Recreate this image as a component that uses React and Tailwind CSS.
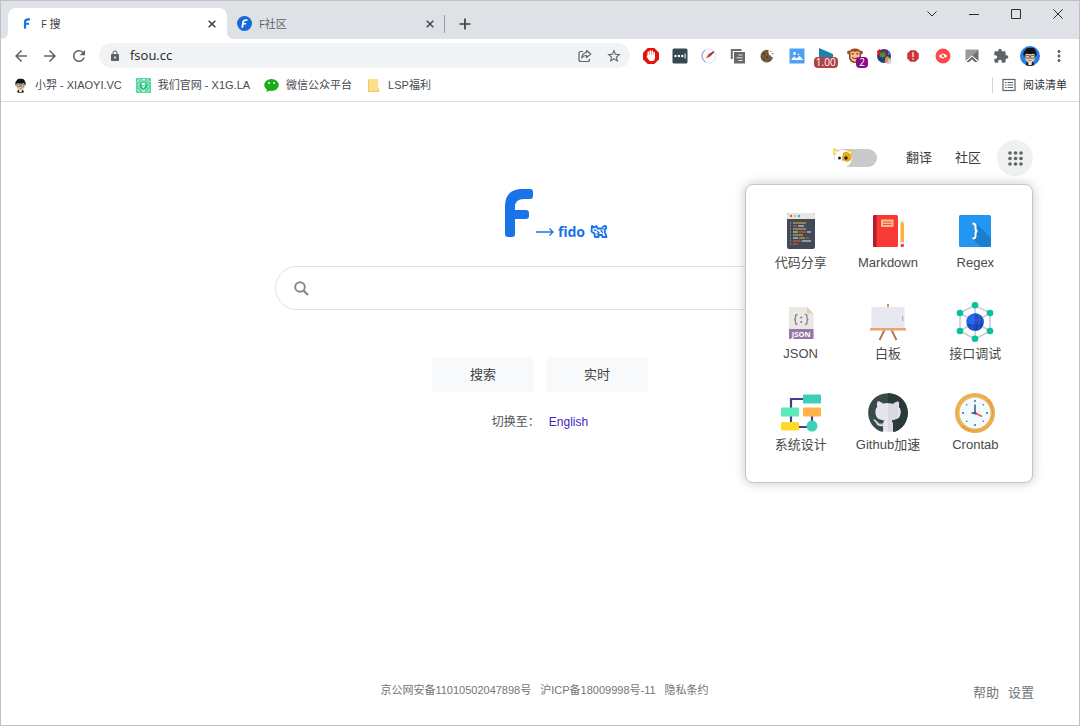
import React from "react";
import { MdArrowBack, MdArrowForward, MdRefresh, MdLock, MdExtension, MdMoreVert, MdStarOutline } from "react-icons/md";
import { FaGithub } from "react-icons/fa";

const chromeFont = "font-['Open_Sans','Noto_Sans_CJK_SC',sans-serif]";
const pageFont = "font-['Liberation_Sans','Noto_Sans_CJK_SC',sans-serif]";

function FMark({ className }) {
  return (
    <svg viewBox="0 0 30 50" className={className} aria-hidden="true">
      <path
        d="M1 18C1 6 8 1 19 1H26Q29 1 29 4V8Q29 11 26 11H20Q11 11 11 19V22H22Q25 22 25 25V28Q25 31 22 31H11V46Q11 49 8 49H4Q1 49 1 46Z"
        fill="currentColor"
      />
    </svg>
  );
}

function CloseIcon({ className }) {
  return (
    <svg viewBox="0 0 8 8" className={className} aria-hidden="true">
      <path d="M.7.7 7.3 7.3M7.3.7.7 7.3" stroke="currentColor" strokeWidth="1.5" />
    </svg>
  );
}

function TabStrip() {
  return (
    <div className="flex h-[38px] items-end bg-[#dee1e6] pl-[7px]">
      <div className="relative flex h-[31px] w-[219px] items-center rounded-t-lg bg-white pl-[13px] pr-[11px]">
        <svg viewBox="0 0 8 8" className="absolute bottom-0 -left-[7px] size-[7px]" aria-hidden="true">
          <path d="M8 0V8H0Q8 8 8 0" fill="#fff" />
        </svg>
        <svg viewBox="0 0 8 8" className="absolute -right-[7px] bottom-0 size-[7px]" aria-hidden="true">
          <path d="M0 0V8H8Q0 8 0 0" fill="#fff" />
        </svg>
        <FMark className="h-[11px] w-[12px] text-[#1a73e8]" />
        <span className="ml-2 flex-1 pt-px text-[11px] text-[#3c4043]">F 搜</span>
        <button type="button" aria-label="关闭 F 搜" className="text-[#3c4043]">
          <CloseIcon className="size-2" />
        </button>
      </div>
      <div className="flex h-[31px] w-[217px] items-center pl-[10px] pr-[10px]">
        <span className="flex size-[15px] items-center justify-center rounded-full bg-[#1668dc] text-white">
          <FMark className="h-[9px] w-[7px] skew-x-[-8deg]" />
        </span>
        <span className="ml-[7px] flex-1 pt-px text-[11px] text-[#5f6368]">F社区</span>
        <button type="button" aria-label="关闭 F社区" className="text-[#45484c]">
          <CloseIcon className="size-2" />
        </button>
      </div>
      <span className="mb-[6px] h-[18px] w-px bg-[#9a9da1]" />
      <button type="button" aria-label="新标签页" className="mb-[9px] ml-[14px] text-[#3c4043]">
        <svg viewBox="0 0 12 12" className="size-3" aria-hidden="true">
          <path d="M6 .5V11.5M.5 6H11.5" stroke="currentColor" strokeWidth="1.7" />
        </svg>
      </button>
      <div className="ml-auto flex self-start text-[#2c2e31]">
        <button type="button" aria-label="搜索标签页" className="flex h-[26px] w-[42px] items-center justify-center">
          <svg viewBox="0 0 10 10" className="size-[10px]" aria-hidden="true">
            <path d="M.5 2.5 5 7 9.5 2.5" fill="none" stroke="currentColor" strokeWidth="1" />
          </svg>
        </button>
        <button type="button" aria-label="最小化" className="flex h-[26px] w-[42px] items-center justify-center">
          <svg viewBox="0 0 10 10" className="size-[10px]" aria-hidden="true">
            <path d="M0 5.5H10" stroke="currentColor" />
          </svg>
        </button>
        <button type="button" aria-label="最大化" className="flex h-[26px] w-[42px] items-center justify-center">
          <svg viewBox="0 0 10 10" className="size-[10px]" aria-hidden="true">
            <path d="M.5.5H9.5V9.5H.5Z" fill="none" stroke="currentColor" />
          </svg>
        </button>
        <button type="button" aria-label="关闭" className="flex h-[26px] w-[42px] items-center justify-center">
          <svg viewBox="0 0 10 10" className="size-[10px]" aria-hidden="true">
            <path d="M.3.3 9.7 9.7M9.7.3.3 9.7" stroke="currentColor" />
          </svg>
        </button>
      </div>
    </div>
  );
}

const extensions = [
  {
    label: "广告拦截",
    icon: (
      <svg viewBox="0 0 16 16" className="size-4">
        <path d="M4.7 0H11.3L16 4.7V11.3L11.3 16H4.7L0 11.3V4.7Z" fill="#e3120b" />
        <path d="M5.3 8V4.3M7.3 7.5V3M9.3 7.5V3.3M11.2 8.5V4.8" stroke="#fff" strokeWidth="1.6" strokeLinecap="round" />
        <path d="M4.6 7H12V9.5Q12 13.3 8.5 13.3 6.2 13.3 5 11L3.6 8.5Z" fill="#fff" />
      </svg>
    ),
  },
  {
    label: "密码管理",
    icon: (
      <svg viewBox="0 0 16 16" className="size-4">
        <rect x=".5" y=".5" width="15" height="15" rx="1.5" fill="#37474f" />
        <g fill="#fff">
          <circle cx="3.500" cy="8" r="1.2" />
          <circle cx="6.9" cy="8" r="1.2" />
          <circle cx="10.3" cy="8" r="1.2" />
          <rect x="12.6" y="5.500" width="1" height="5" />
        </g>
      </svg>
    ),
  },
  {
    label: "网页助手",
    icon: (
      <svg viewBox="0 0 16 16" className="size-4">
        <circle cx="8" cy="8" r="7" fill="#fbfbfd" stroke="#e0e2e8" />
        <path d="M4 2.3A7 7 0 0 0 4.500 14" fill="none" stroke="#9fb1e2" strokeWidth="1.2" />
        <path d="M5 10.500 7.500 6 12 4 10 8Z" fill="#d8343e" />
        <path d="M10 6.300 12.800 3.600" stroke="#7b2737" strokeWidth="1.500" />
      </svg>
    ),
  },
  {
    label: "复制",
    icon: (
      <svg viewBox="0 0 16 16" className="size-4">
        <path d="M1.800 11V2H11.500" fill="none" stroke="#6d6d6d" strokeWidth="2" />
        <rect x="4" y="4" width="11" height="11.500" fill="#686868" />
        <path d="M8.500 7H12.500M6.500 9.700H12.500M8.500 12.500H12.500" stroke="#e6e6e6" strokeWidth="1.100" />
      </svg>
    ),
  },
  {
    label: "Cookie",
    icon: (
      <svg viewBox="0 0 16 16" className="size-4">
        <path d="M10 2.200A6.300 6.300 0 1 0 14 9.500Q12 9.300 11.600 7.600 9.500 7.500 9.800 5.300 8.800 3.700 10 2.200" fill="#76583f" />
        <circle cx="12" cy="3.500" r=".8" fill="#b39b86" />
        <circle cx="13.800" cy="5.700" r=".7" fill="#76583f" />
        <g fill="#4d3726">
          <circle cx="5" cy="6" r=".9" />
          <circle cx="8" cy="9" r=".9" />
          <circle cx="5" cy="11" r=".8" />
          <circle cx="10" cy="12" r=".7" />
        </g>
      </svg>
    ),
  },
  {
    label: "图片",
    icon: (
      <svg viewBox="0 0 16 16" className="size-4">
        <rect x=".5" y=".5" width="15" height="15" fill="#4f9ff4" />
        <circle cx="5.500" cy="5.500" r="1.400" fill="#fff" />
        <circle cx="9.500" cy="6.500" r=".8" fill="#fff" />
        <path d="M2.500 12V11L5 8.500 7.500 10.500 10.500 8 13.500 11V12Z" fill="#fff" />
      </svg>
    ),
  },
  {
    label: "视频速度",
    icon: (
      <span className="flex flex-col items-center pt-[5px]">
        <svg viewBox="0 0 14 9" className="h-[9px] w-[14px]">
          <path d="M0 0 14 6V9H0Z" fill="#1685b2" />
        </svg>
        <span className="rounded-sm bg-[#ad4343] px-[2px] text-[10px] leading-[11px] text-white">1.00</span>
      </span>
    ),
  },
  {
    label: "脚本管理",
    icon: (
      <span className="relative flex">
        <svg viewBox="0 0 16 16" className="size-4">
          <circle cx="2" cy="4.500" r="2" fill="#a45629" />
          <circle cx="14" cy="4.500" r="2" fill="#a45629" />
          <path d="M2 6Q2 .5 8 .5T14 6V10Q13 15 8 15T2 10Z" fill="#a1481f" />
          <path d="M3.500 4Q5.500 2.300 8 4 10.500 2.300 12.500 4V10Q11 13.500 8 13.500T3.500 10Z" fill="#ecc39a" />
          <circle cx="5.700" cy="5.800" r="1" fill="#c5271c" />
          <circle cx="10.300" cy="5.800" r="1" fill="#c5271c" />
          <path d="M5 9.500Q8 12 11 9.500" fill="none" stroke="#7c3518" />
        </svg>
        <span className="absolute -right-[5px] -bottom-[4px] rounded-sm bg-[#860b8d] px-[3px] text-[10px] leading-[11px] text-white">2</span>
      </span>
    ),
  },
  {
    label: "翻译插件",
    icon: (
      <svg viewBox="0 0 16 16" className="size-4">
        <circle cx="8" cy="8" r="7" fill="#203f7c" />
        <path d="M1 3 4 1 6 5 9 2 11 7 7 10 2 7Z" fill="#d4191c" />
        <circle cx="6.500" cy="7" r="2.500" fill="#28a245" />
        <path d="M12 3 14.500 6 12 7Z" fill="#308bc9" />
        <path d="M9 15Q8 10 11 8L14 10 15 14Z" fill="#dc8d43" />
        <path d="M12 11 16 13 14 16H11Z" fill="#d9d2ca" />
      </svg>
    ),
  },
  {
    label: "提醒",
    icon: (
      <svg viewBox="0 0 16 16" className="size-4">
        <path d="M5.500 2.200H10.500L13.800 5.500V10.500L10.500 13.800H5.500L2.200 10.500V5.500Z" fill="#c93538" />
        <path d="M8 4.300V9M8 10.300V11.800" stroke="#f6dcdc" strokeWidth="1.500" />
      </svg>
    ),
  },
  {
    label: "隐藏内容",
    icon: (
      <svg viewBox="0 0 16 16" className="size-4">
        <circle cx="8" cy="8" r="7.500" fill="#fb4a4d" />
        <path d="M3.700 8Q8 3 12.300 8 8 13 3.700 8Z" fill="#fff" />
        <circle cx="8" cy="8" r="1.200" fill="#fb4a4d" />
        <path d="M4.500 5 12 11.500" stroke="#fb4a4d" strokeWidth=".9" />
      </svg>
    ),
  },
  {
    label: "截图",
    icon: (
      <svg viewBox="0 0 16 16" className="size-4">
        <path d="M1.500 1.500H14.500L8 7.500 1.500 13Z" fill="#9a9a9a" />
        <path d="M14.500 1.500V13L8 7.500Z" fill="#707070" />
        <path d="M1.500 14.500 8 8 14.500 14.500H11L8 11.800 5 14.500Z" fill="#686868" stroke="#fff" strokeWidth=".9" />
      </svg>
    ),
  },
  { label: "扩展程序", icon: <MdExtension className="size-4 text-[#5f6368]" /> },
  {
    label: "个人资料",
    icon: (
      <svg viewBox="0 0 20 20" className="size-5">
        <circle cx="10" cy="10" r="10" fill="#2b7de0" />
        <Face />
      </svg>
    ),
  },
  { label: "菜单", icon: <MdMoreVert className="size-[18px] text-[#5f6368]" /> },
];

function Face() {
  return (
    <g>
      <path d="M5.500 19 7 15.500H13L14.500 19Q10 21 5.500 19" fill="#222" />
      <path d="M8 15H12L11.500 19H8.500Z" fill="#eee" />
      <ellipse cx="10" cy="11.500" rx="5" ry="5" fill="#f0cda9" />
      <path d="M4 11Q2.500 6 5 4.500 6 1.300 10 2 15 1 15.600 5 17.500 7 16 11L14.500 7.500 10 8.300 5.500 7.500Z" fill="#111" />
      <path d="M5.500 9.500H9.300V12.300H5.800ZM10.700 9.500H14.500L14.200 12.300H10.700ZM9.300 10.500H10.700" fill="none" stroke="#555" strokeWidth=".8" />
      <path d="M8.500 14.500H11.500" stroke="#94624a" strokeWidth=".8" />
    </g>
  );
}

function Toolbar() {
  const nav = "flex h-[25px] w-[29px] items-center justify-center text-[#5f6368]";
  return (
    <div className="flex items-center bg-white pt-1 pr-[5px] pb-[5px] pl-[5px]">
      <button type="button" aria-label="后退" className={nav}><MdArrowBack className="size-[18px]" /></button>
      <button type="button" aria-label="前进" className={nav}><MdArrowForward className="size-[18px]" /></button>
      <button type="button" aria-label="刷新" className={nav}><MdRefresh className="size-[18px]" /></button>
      <div className="mx-[6px] flex h-[25px] min-w-0 flex-1 items-center rounded-full bg-[#f1f3f4] pr-[8px] pl-[10px] text-[#5f6368]">
        <MdLock className="size-3 shrink-0" />
        <input
          type="text"
          aria-label="地址栏"
          defaultValue="fsou.cc"
          className="ml-[9px] min-w-0 flex-1 bg-transparent text-[13px] text-[#202124] outline-none"
        />
        <button type="button" aria-label="分享此页" className="mr-[14px]">
          <svg viewBox="0 0 14 14" className="size-[14px]" aria-hidden="true">
            <g fill="none" stroke="currentColor" strokeWidth="1.200" strokeLinejoin="round">
              <path d="M5 2.500H3Q1 2.500 1 4.500V10.500Q1 12.500 3 12.500H9.500Q11.500 12.500 11.500 10.500V10" />
              <path d="M8.500 1.500 12.800 5 8.500 8.500V6.500Q5.300 6.300 3.800 9 4.200 4 8.500 3.500Z" />
            </g>
          </svg>
        </button>
        <button type="button" aria-label="为此页添加书签">
          <MdStarOutline className="size-4" />
        </button>
      </div>
      <div className="flex w-[438px] shrink-0 justify-between">
        {extensions.map((e) => (
          <button key={e.label} type="button" aria-label={e.label} className="flex h-[25px] w-[29px] shrink-0 items-center justify-center">
            {e.icon}
          </button>
        ))}
      </div>
    </div>
  );
}

function Bookmark({ icon, children }) {
  return (
    <a href="#" className="flex items-center gap-[7px] whitespace-nowrap">
      {icon}
      {children}
    </a>
  );
}

function BookmarksBar() {
  return (
    <div className={`flex h-[29px] items-center gap-[14px] border-b border-[#dcdee1] bg-white pr-3 pb-[4px] pl-[12px] text-[11px] text-[#46494d] ${pageFont}`}>
      <Bookmark icon={<svg viewBox="2 1 16 19" className="size-[15px]"><Face /></svg>}>小羿 - XIAOYI.VC</Bookmark>
      <Bookmark
        icon={
          <svg viewBox="0 0 15 15" className="size-[15px]">
            <rect width="15" height="15" rx="1" fill="#5bd6a0" />
            <path d="M1 4 4 1M11 1 14 4M1 11 4 14M11 14 14 11M6 1.500H9M6 13.500H9" stroke="#c9f5e2" />
            <circle cx="7.500" cy="7.500" r="4.700" fill="#26bf7c" stroke="#e3fbf0" strokeWidth=".8" />
            <path d="M5.500 5.300 7.500 4.500 9.500 5.300Q9.700 9 7.500 10.500 5.300 9 5.500 5.300" fill="#effff8" />
            <path d="M6.500 7.200 7.300 8.200 8.600 6.500" fill="none" stroke="#1ba268" strokeWidth=".8" />
          </svg>
        }
      >
        我们官网 - X1G.LA
      </Bookmark>
      <Bookmark
        icon={
          <svg viewBox="0 0 15 15" className="size-[15px]">
            <ellipse cx="7.500" cy="7" rx="7.300" ry="6" fill="#1aad19" />
            <path d="M3 11 2.500 14 6 12.500Z" fill="#1aad19" />
            <circle cx="5" cy="5" r="1" fill="#eaffea" />
            <circle cx="10" cy="5" r="1" fill="#eaffea" />
          </svg>
        }
      >
        微信公众平台
      </Bookmark>
      <Bookmark
        icon={
          <svg viewBox="0 0 15 15" className="size-[15px]">
            <path d="M2 1H12V9.500L13 10V14H2Z" fill="#ffe08a" />
            <path d="M2 1V14H13V13H3V1Z" fill="#f3ca56" />
            <path d="M10.500 14 13 10.500V14Z" fill="#f0c24b" />
          </svg>
        }
      >
        LSP福利
      </Bookmark>
      <button type="button" className="ml-auto flex items-center gap-[7px] border-l border-[#d0d3d7] pl-[9px] text-[#2f3236]">
        <svg viewBox="0 0 14 14" className="size-[14px]" aria-hidden="true">
          <rect x="1" y="1.500" width="12" height="11" fill="none" stroke="#5f6368" strokeWidth="1.200" />
          <path d="M3 4.500H4.500M3 7H4.500M3 9.500H4.500M5.500 4.500H11M5.500 7H11M5.500 9.500H11" stroke="#5f6368" />
        </svg>
        阅读清单
      </button>
    </div>
  );
}

const apps = [
  {
    name: "代码分享",
    icon: (
      <svg viewBox="0 0 40 40" className="size-10" aria-hidden="true">
        <rect x="6" y="2" width="28" height="36" rx="2" fill="#414b58" />
        <path d="M6 8V4Q6 2 8 2H32Q34 2 34 4V8Z" fill="#e6e6e8" />
        <circle cx="10" cy="5" r="1.200" fill="#f0573a" />
        <circle cx="14" cy="5" r="1.200" fill="#f4bd3f" />
        <circle cx="18" cy="5" r="1.200" fill="#35b7a8" />
        <g strokeWidth="1.200">
          <path d="M9 12H10M9 15H10M9 18H10M9 21H10M9 24H10M9 27H10M9 30H10M9 33H10" stroke="#aab2bb" />
          <path d="M12 12H25M12 18H25M12 24H22M18 27H24" stroke="#e8b83f" />
          <path d="M12 15H16M18 21H25M25 27H28M12 30H20M12 33H17" stroke="#ed5534" />
          <path d="M17 15H23M12 21H17M26 21H30M12 27H17M21 30H30" stroke="#e8ebee" />
        </g>
      </svg>
    ),
  },
  {
    name: "Markdown",
    icon: (
      <svg viewBox="0 0 40 40" className="size-10" aria-hidden="true">
        <rect x="5" y="4" width="25" height="32" rx="1.500" fill="#f93838" />
        <path d="M6.500 4H8.500V36H6.500Q5 36 5 34.500V5.500Q5 4 6.500 4" fill="#b71c24" />
        <rect x="13" y="8.500" width="12.500" height="7.500" fill="#ffb98a" />
        <path d="M15 11H23.500M15 13.500H23.500" stroke="#f1563c" strokeWidth="1.200" />
        <path d="M32.500 13 34.300 9.500 36 13V32H32.500Z" fill="#ffb03a" />
        <rect x="32.500" y="31" width="3.500" height="2" fill="#eceff1" />
        <rect x="32.500" y="33" width="3.500" height="3" rx="1" fill="#ef4040" />
      </svg>
    ),
  },
  {
    name: "Regex",
    icon: (
      <svg viewBox="0 0 40 40" className="size-10" aria-hidden="true">
        <rect x="4" y="4" width="32" height="32" rx="1.500" fill="#2196f3" />
        <path d="M22 13 36 27V34.500Q36 36 34.500 36H26L17.500 27.500Z" fill="#1b7fd0" />
        <path d="M17.500 12.500Q20.500 12.500 20.500 15V17.500Q20.500 20 22.500 20 20.500 20 20.500 22.500V25Q20.500 27.500 17.500 27.500" fill="none" stroke="#fff" strokeWidth="2" />
      </svg>
    ),
  },
  {
    name: "JSON",
    icon: (
      <svg viewBox="0 0 40 40" className="size-10" aria-hidden="true">
        <path d="M8 5H26L32.500 11.500V37H8Z" fill="#e9e9e0" />
        <path d="M26 5 32.500 11.500H26Z" fill="#d3d3c4" />
        <rect x="8" y="27" width="24.500" height="10" fill="#9777a8" />
        <path d="M16.500 12.500Q14.500 12.500 14.500 14.500V16Q14.500 17.500 13 17.500 14.500 17.500 14.500 19V20.500Q14.500 22.500 16.500 22.500M24 12.500Q26 12.500 26 14.500V16Q26 17.500 27.500 17.500 26 17.500 26 19V20.500Q26 22.500 24 22.500" fill="none" stroke="#9777a8" strokeWidth="1.300" />
        <circle cx="20.200" cy="15.500" r="1.100" fill="#9777a8" />
        <circle cx="20.200" cy="20" r="1.100" fill="#9777a8" />
        <text x="20.200" y="34.800" textAnchor="middle" fontSize="7.500" fontWeight="700" fill="#fff" fontFamily="Noto Sans, sans-serif">JSON</text>
      </svg>
    ),
  },
  {
    name: "白板",
    icon: (
      <svg viewBox="0 0 40 40" className="size-10" aria-hidden="true">
        <path d="M20 2V6" stroke="#d18a52" strokeWidth="1.800" />
        <path d="M16.500 28 11.500 38M23.500 28 28.500 38" stroke="#a9744c" strokeWidth="1.800" />
        <rect x="3.500" y="5" width="33" height="22" fill="#e9e8f0" />
        <rect x="34" y="14" width="1.300" height="5" fill="#b7b5c4" />
        <rect x="2" y="26" width="36" height="2.500" fill="#e8a56b" />
      </svg>
    ),
  },
  {
    name: "接口调试",
    icon: (
      <svg viewBox="0 0 40 40" className="size-10" aria-hidden="true">
        <path d="M20 3.500 35 11V29L20 37 5 29V11ZM20 3.500V37M5 11 35 29M35 11 5 29" fill="none" stroke="#cbccdc" strokeWidth="1.600" />
        <circle cx="20" cy="20" r="8.700" fill="#2563eb" />
        <path d="M20 11.300A8.700 8.700 0 0 1 20 28.700Z" fill="#1e4fc7" />
        <path d="M11.500 22H28.500A8.700 8.700 0 0 1 11.500 22" fill="#183b9b" opacity=".55" />
        <path d="M11.300 18H28.700M17 12V28M24 12.300V27.700" stroke="#4681f4" strokeWidth=".6" opacity=".7" />
        <g fill="#05c29c">
          <circle cx="20" cy="3.300" r="3.300" />
          <circle cx="35" cy="11" r="3.300" />
          <circle cx="35" cy="29" r="3.300" />
          <circle cx="20" cy="36.700" r="3.300" />
          <circle cx="5" cy="29" r="3.300" />
          <circle cx="5" cy="11" r="3.300" />
        </g>
      </svg>
    ),
  },
  {
    name: "系统设计",
    icon: (
      <svg viewBox="0 0 40 40" className="size-10" aria-hidden="true">
        <path d="M22 6H10V34M31 18V34H15" fill="none" stroke="#443d98" strokeWidth="2.200" />
        <rect x="22" y="1.500" width="18" height="9" rx="1" fill="#3ecfb7" />
        <rect x="0" y="14.500" width="18" height="9" rx="1" fill="#5eeabb" />
        <rect x="22" y="14.500" width="18" height="9" rx="1" fill="#ffb349" />
        <rect x="0" y="29" width="18" height="8.500" rx="1" fill="#ffda2d" />
        <circle cx="31" cy="33" r="5.500" fill="#3ecfb7" />
      </svg>
    ),
  },
  {
    name: "Github加速",
    icon: (
      <svg viewBox="0 0 40 40" className="size-10" aria-hidden="true">
        <clipPath id="gh-right"><rect x="20" y="0" width="20" height="40" /></clipPath>
        <circle cx="20" cy="20" r="19" fill="#e6e5ec" />
        <path d="M20 8V39A19 19 0 0 0 30 36V8Z" fill="#dad9e2" />
        <FaGithub size={41} x="-.5" y="-.5" color="#384a49" />
        <g clipPath="url(#gh-right)">
          <FaGithub size={41} x="-.5" y="-.5" color="#293a39" />
        </g>
      </svg>
    ),
  },
  {
    name: "Crontab",
    icon: (
      <svg viewBox="0 0 40 40" className="size-10" aria-hidden="true">
        <circle cx="20" cy="20" r="20" fill="#eab04f" />
        <path d="M34 6A20 20 0 0 1 6 34Z" fill="#e69c42" />
        <circle cx="20" cy="20" r="17" fill="#edb855" />
        <circle cx="20" cy="20" r="15.500" fill="#f1fafe" />
        <g fill="#4a6b85">
          <circle cx="20" cy="8" r="1" /><circle cx="28.300" cy="11.700" r=".8" />
          <circle cx="32" cy="20" r="1" /><circle cx="28.300" cy="28.300" r=".8" />
          <circle cx="20" cy="32" r="1" /><circle cx="11.700" cy="28.300" r=".8" />
          <circle cx="8" cy="20" r="1" /><circle cx="11.700" cy="11.700" r=".8" />
        </g>
        <path d="M20 11.500V21M16.500 20H20" stroke="#3d5b78" strokeWidth="1.500" />
        <path d="M20 20 27 23.500" stroke="#e5525b" strokeWidth="1.500" />
        <circle cx="20" cy="20" r="1.600" fill="#3d5b78" />
      </svg>
    ),
  },
];

function AppsPanel() {
  return (
    <nav
      aria-label="应用"
      className="absolute top-[calc(100%+8px)] right-0 z-10 grid w-72 grid-cols-3 gap-y-[29px] rounded-lg border border-[#c4c4c4] bg-white pt-[26px] pr-[13px] pb-[27px] pl-[11px] shadow-[0_0_12px_rgba(0,0,0,0.22)]"
    >
      {apps.map((a) => (
        <a key={a.name} href="#" className="flex flex-col items-center gap-[2px] text-[13px] leading-5 text-[#4a4a4a]">
          {a.icon}
          {a.name}
        </a>
      ))}
    </nav>
  );
}

function CatToggle() {
  return (
    <label className="relative flex">
      <input type="checkbox" role="switch" aria-label="深色模式" className="h-[18px] w-[43px] appearance-none rounded-full bg-[#cacaca]" />
      <svg viewBox="0 0 21 20" className="pointer-events-none absolute -top-px -left-px h-5 w-[21px]" aria-hidden="true">
        <path d="M1 7 .8.800 6 3Z" fill="#fff2b8" stroke="#f2bb20" />
        <path d="M14 3 20 3 17 8Z" fill="#fff2b8" stroke="#f2bb20" />
        <circle cx="10" cy="10.500" r="8.700" fill="#fff" />
        <path d="M10 5Q14 2 18 6.500 19.500 12 15.500 13.500 11 14.500 9 10Z" fill="#e5ad15" />
        <circle cx="6.500" cy="10" r="1.500" fill="#222" />
        <circle cx="13" cy="10" r="1.700" fill="#222" />
        <path d="M9 12H10.500" stroke="#666" />
      </svg>
    </label>
  );
}

export default function App() {
  return (
    <div className={`flex min-h-screen flex-col border border-[#bfc0c2] bg-white ${pageFont}`}>
      <header className={chromeFont}>
        <TabStrip />
        <Toolbar />
        <BookmarksBar />
      </header>
      <main className="flex flex-1 flex-col">
        <div className="relative z-10 flex items-center justify-end pt-[38px] pr-[46px] text-[13px] text-[#3c3c3c]">
          <CatToggle />
          <a href="#" className="ml-[29px]">翻译</a>
          <a href="#" className="ml-[23px]">社区</a>
          <div className="relative ml-4">
            <button type="button" aria-label="应用菜单" aria-expanded="true" className="flex size-9 items-center justify-center rounded-full bg-[#eff1f1]">
              <svg viewBox="0 0 15 15" className="size-[15px]" fill="#5f6368" aria-hidden="true">
                {[2, 7.5, 13].map((y) => [2, 7.5, 13].map((x) => <circle key={`${x}-${y}`} cx={x} cy={y} r="1.800" />))}
              </svg>
            </button>
            <AppsPanel />
          </div>
        </div>

        <div className="mx-auto mt-3 flex w-full max-w-[530px] flex-col items-center">
          <h1 className="flex items-end pl-8 text-[#1a73e8]">
            <FMark className="h-[50px] w-[30px]" />
            <span className="flex h-[13px] items-center">
              <svg viewBox="0 0 18 8" className="ml-[2px] h-2 w-[18px]" aria-hidden="true">
                <path d="M0 4H17M13.500.5 17 4 13.500 7.500" fill="none" stroke="currentColor" strokeWidth="1.300" />
              </svg>
              <span className="ml-1 font-['Noto_Sans',sans-serif] text-[14px] leading-5 font-bold">fido</span>
              <svg viewBox="0 0 18 15" className="ml-[5px] h-[15px] w-[18px]" aria-hidden="true">
                <g stroke="currentColor" strokeLinejoin="round" strokeLinecap="round">
                  <path
                    d="M2 2 4 3.500 6.500 2 7.500 4.500H12.500Q13 1.500 15.500 2 17.500 4 14.500 5.500L15 8.500 16.500 13H12.500L12 11H8.500L8.500 13H5L4.500 9.500 1.500 7.500Z"
                    fill="none"
                    strokeWidth="1.900"
                  />
                  <path d="M4.500 6.200H6M7.500 7.500 9 8.500M11 6.500 12.500 8.500M7 10 9 8.800" fill="none" strokeWidth="1.400" />
                </g>
              </svg>
            </span>
          </h1>
          <form className="mt-7 flex w-full flex-col items-center" onSubmit={(e) => e.preventDefault()}>
            <div className="flex h-11 w-full items-center rounded-full border border-[#dfe1e5] pr-5 pl-[18px]">
              <svg viewBox="0 0 15 15" className="size-[15px] shrink-0 text-[#85888d]" aria-hidden="true">
                <circle cx="6" cy="6" r="4.800" fill="none" stroke="currentColor" strokeWidth="1.900" />
                <path d="M9.500 9.500 14 14" stroke="currentColor" strokeWidth="2.200" />
              </svg>
              <input type="search" aria-label="搜索" className="ml-3 min-w-0 flex-1 bg-transparent text-sm outline-none" />
            </div>
            <div className="mt-[47px] flex gap-3 text-[13px] text-[#3c4043]">
              <button type="submit" className="h-[35px] w-[102px] rounded bg-[#f8f9fa]">搜索</button>
              <button type="button" className="h-[35px] w-[102px] rounded bg-[#f8f9fa]">实时</button>
            </div>
          </form>
          <p className="mt-5 flex gap-[9px] text-[12px] leading-5 text-[#4d5156]">
            <span>切换至：</span>
            <a href="#" className="text-[#3d24c4]">English</a>
          </p>
        </div>

        <footer className="mt-auto grid grid-cols-[1fr_auto_1fr] items-start pt-6 pr-[45px] pb-[21px] pl-[54px] text-[#70757a]">
          <div className="col-start-2 flex gap-[9px] text-[11px] leading-4">
            <a href="#">京公网安备11010502047898号</a>
            <a href="#">沪ICP备18009998号-11</a>
            <a href="#">隐私条约</a>
          </div>
          <div className="flex justify-end gap-[9px] text-[13px] leading-[22px]">
            <a href="#">帮助</a>
            <a href="#">设置</a>
          </div>
        </footer>
      </main>
    </div>
  );
}
